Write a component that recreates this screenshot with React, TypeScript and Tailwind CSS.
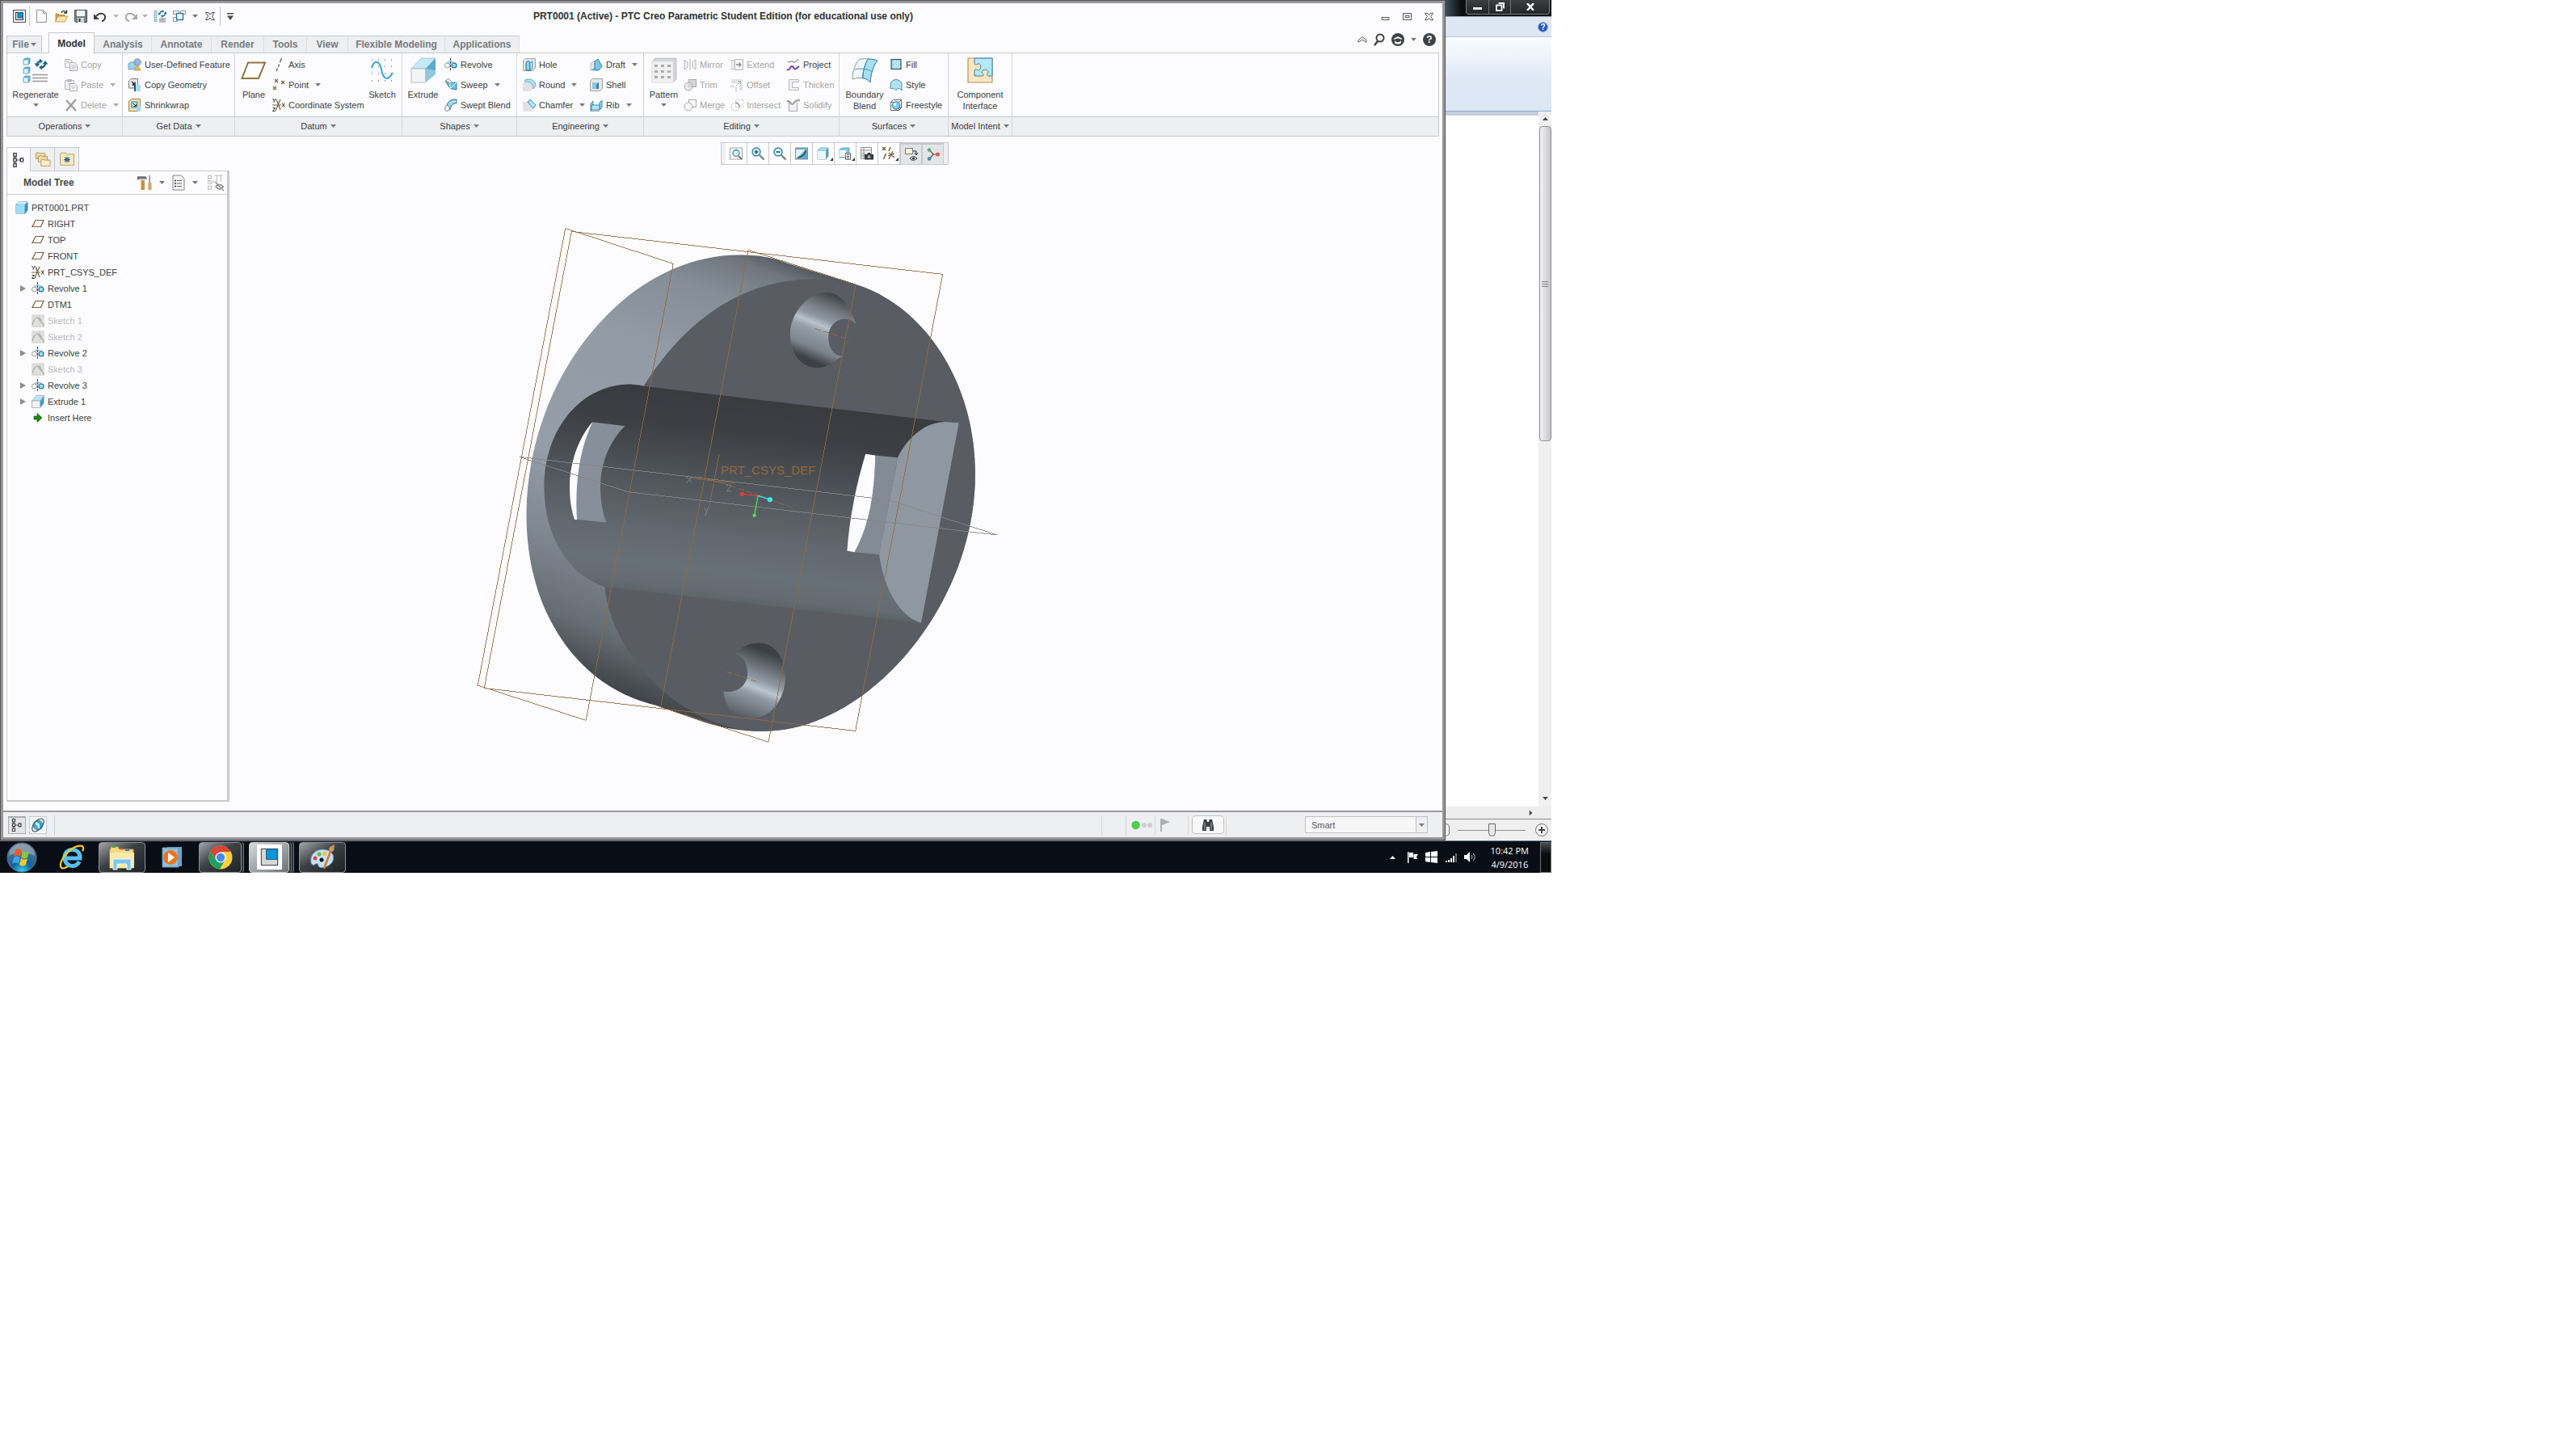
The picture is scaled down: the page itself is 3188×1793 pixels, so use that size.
import { ReactNode } from "react";
import clsx from "clsx";

const icons: Record<string, ReactNode> = {
  creo: (
    <>
      <rect x="0.5" y="0.5" width="15" height="15" fill="#fff" stroke="#4a5157" />
      <rect x="3.5" y="3.5" width="9" height="9" fill="#dfe3e6" stroke="#2d3438" />
      <rect x="6" y="3.5" width="6.5" height="6.5" fill="#0b93d8" stroke="#15557c" />
    </>
  ),
  page: <path d="M1.500 .5h8l4 4v11h-12zM9.500 .5v4h4" fill="#fff" stroke="#8c9196" />,
  open: (
    <>
      <path d="M.5 15V4.500h4l1 1.500h7V15z" fill="#c99a4c" />
      <path d="M.5 15l3-7h12l-3 7z" fill="#fbe2a5" stroke="#b1853b" strokeWidth=".7" />
      <path d="M8 4c1-3 4-3 6-1M14.500 .5v3.500h-3.500" fill="none" stroke="#333" strokeWidth="1.300" />
    </>
  ),
  save: (
    <>
      <path d="M.5 .5h15v15H2l-1.500-1.500z" fill="#7d8386" stroke="#4a4f52" />
      <rect x="3" y="1" width="10" height="7" fill="#f4f6f7" />
      <rect x="4" y="10" width="8" height="6" fill="#cdd2d4" />
      <rect x="5.500" y="11" width="2" height="4" fill="#333" />
    </>
  ),
  undo: (
    <>
      <path d="M3 8c4-5 12-4 11 2 0 2-2 4-4 4" fill="none" stroke="#3a3d40" strokeWidth="2" />
      <path d="M0 5v7h7z" fill="#3a3d40" />
    </>
  ),
  redo: (
    <>
      <path d="M13 8C9 3 1 4 2 10c0 2 2 4 4 4" fill="none" stroke="#a5a7a9" strokeWidth="2" />
      <path d="M16 5v7H9z" fill="#a5a7a9" />
    </>
  ),
  regen: (
    <>
      <path d="M1 1.500h3v3H1zM1 6.500h3v3H1zM1 11.500h3v3H1z" fill="#dff4fb" stroke="#6fa8bd" />
      <path d="M7 11h8M7 13h8M7 15h8" stroke="#777" />
      <path d="M7.500 6c0-3 2-4 4-4M14.500 4c0 3-2 4-4 4" fill="none" stroke="#1b6b8d" strokeWidth="1.400" />
      <path d="M5 4.500h4L7 7zM13 5h3.500L15 2zM11 0v4l2-2zM11 6v4L9 8z" fill="#1b6b8d" />
    </>
  ),
  windows: (
    <>
      <path d="M.5 1.500h7v4h-7zM9.500 1.500h6v4h-6zM.5 9.500h5v5h-5z" fill="#fff" stroke="#8b9297" />
      <rect x="4.500" y="4.500" width="8" height="8" fill="#e6f6fb" stroke="#27708e" strokeWidth="1.300" />
    </>
  ),
  close: <path d="M2.500 3.500h3.500l2 2.500 2-2.500h3.500l-3.200 4.500 3.200 4.500H10l-2-2.500-2 2.500H2.500L5.700 8z" fill="#fff" stroke="#3f4245" />,
  copy: (
    <>
      <path d="M.5 1.500h6l2.500 2v8H.5z" fill="#f6f6f7" stroke="#b6b8ba" />
      <path d="M6.500 5.500h6l3 2.500v7.500h-9z" fill="#f6f6f7" stroke="#a9abad" />
      <path d="M2 4h4M2 6h3M8.500 9h5M8.500 11h5M8.500 13h5" stroke="#bbb" />
    </>
  ),
  paste: (
    <>
      <path d="M.5 2.500h11v11H.5z" fill="#ededee" stroke="#b6b8ba" />
      <path d="M3 1h6v3H3z" fill="#b6b8ba" />
      <path d="M6.500 6.500h6l3 2.500v6.500h-9z" fill="#f9f9fa" stroke="#a9abad" />
      <path d="M8.500 10h5M8.500 12h5" stroke="#bbb" />
    </>
  ),
  delete: <path d="M2 2l12 13M14 1L2 15" stroke="#9d9fa1" strokeWidth="2.500" />,
  udf: (
    <>
      <circle cx="11" cy="5" r="4.500" fill="#9db4de" stroke="#6f86b4" strokeWidth=".6" />
      <path d="M0 7l2-2h6v7l-2 2H0z" fill="#9ad6ee" stroke="#4a8dab" strokeWidth=".7" />
      <path d="M11 8l4 7H7z" fill="#e2b866" stroke="#a67d34" strokeWidth=".6" />
    </>
  ),
  copygeom: (
    <>
      <path d="M.5 3l3-2.500h8v8L8 12H.5z" fill="#e9ebec" stroke="#777b7e" />
      <path d="M4 4l4 4M8 4.500V8H4.500" fill="none" stroke="#222" strokeWidth="1.300" />
      <rect x="8" y="8" width="7" height="8" fill="#a6e0f4" />
      <path d="M8 8v8" stroke="#1d5c78" strokeWidth="2" />
    </>
  ),
  shrink: (
    <>
      <path d="M.5 3l3-2.500h11v9L12 15.500H.5z" fill="#f0deb6" stroke="#a98540" />
      <rect x="4" y="4" width="7" height="7" fill="#c6ecf8" stroke="#2f7e9e" />
      <path d="M5.500 5.500l4 4M9.500 6.500v3h-3" fill="none" stroke="#222" />
      <rect x="10" y="10" width="5" height="5.500" fill="#8fdcf6" />
    </>
  ),
  plane: <path d="M5 3.500h10L11.500 11.500H1z" fill="#fff" stroke="#75603a" strokeWidth="1.200" />,
  axis: <path d="M11.500 0l-2 5M8.500 7.500l-1 3M6.500 12.500L5 16" stroke="#75603a" strokeWidth="1.400" />,
  point: <path d="M3 1l4 4M7 1L3 5M11 3l4 4M15 3l-4 4M1 10l4 4M5 10l-4 4" stroke="#75603a" strokeWidth="1.200" />,
  csys: (
    <>
      <path d="M0 8h11M10 1L4 15M5 1l5 13" stroke="#75603a" strokeWidth="1.200" />
      <path d="M.5 0l1.500 2.500M4 0L1.500 5M12 5.500l3.500 5M15.500 5.500l-3.500 5M.5 11.500h3l-3 4h3" fill="none" stroke="#333" />
    </>
  ),
  revolve: (
    <>
      <path d="M2 7c2-4 10-4 12 0" fill="#c4e6f3" stroke="#8fb4c4" />
      <circle cx="3.500" cy="9" r="3" fill="#fff" stroke="#8f9599" />
      <circle cx="12" cy="9" r="3" fill="#9fdcf3" stroke="#1d7097" strokeWidth="1.200" />
      <path d="M7.500 0v16" stroke="#444" strokeDasharray="3 1" />
    </>
  ),
  sweep: (
    <>
      <path d="M1 3l6 2.500L15 5v9l-8-1.500z" fill="#72bddb" stroke="#2c7fa3" />
      <path d="M7 5.500v7l8-7.500" fill="none" stroke="#e6f7fd" />
      <path d="M1 3l4-3 5 5-3 1z" fill="#e4e8ea" stroke="#7b8387" strokeWidth=".7" />
    </>
  ),
  swept: (
    <>
      <path d="M3 9C4 3 9 .5 15 1v5c-4-.5-7 2-8 8z" fill="#8fcfe8" stroke="#2e7a9b" />
      <path d="M5 10c1-4 4-6 10-6.500" fill="none" stroke="#d9f2fb" />
      <ellipse cx="3.500" cy="12" rx="3" ry="3.500" fill="#f1f3f4" stroke="#80888c" />
    </>
  ),
  hole: (
    <>
      <path d="M.5 3l3-2.500h12V12l-3 3.500H.5z" fill="#e4e8ea" stroke="#9aa2a6" />
      <path d="M4 15V6c0-3 5-3 5 0v9z" fill="#8ed4ee" stroke="#1f6f93" />
      <path d="M9 6c1-2 3-2 3-2v9l-3 2z" fill="#c1e9f7" stroke="#1f6f93" strokeWidth=".7" />
    </>
  ),
  round: (
    <>
      <path d="M0 4h8c4 1 5 4 5 8l-4 4H0z" fill="#dfe3e5" />
      <path d="M4 1h4c5 0 8 4 8 8l-3 4c0-5-3-9-9-9L2 3z" fill="#aadff2" stroke="#4c98b7" strokeWidth=".7" />
    </>
  ),
  chamfer: (
    <>
      <path d="M0 4h6l6 6v6H0z" fill="#dfe3e5" />
      <path d="M6 4l3-3 7 7-3 4z" fill="#b5e5f5" stroke="#2c88ae" />
    </>
  ),
  draft: (
    <>
      <path d="M1 6l5-3v12H1z" fill="#e3e6e8" stroke="#a4abae" strokeWidth=".6" />
      <path d="M6 4L10 1l5 9-4 5H6z" fill="#7cc8e4" stroke="#2f84a8" />
      <path d="M1 15l5-3 5 3z" fill="#49a9ce" />
    </>
  ),
  shell: (
    <>
      <path d="M.5 3l3-2.500h12V12l-3 3.500H.5z" fill="#e4e8ea" stroke="#9aa2a6" />
      <rect x="3" y="5" width="8" height="8" fill="#2f83a8" />
      <path d="M3 5h8l-3 3v5H3z" fill="#8fc8de" />
    </>
  ),
  rib: (
    <>
      <path d="M1 6l3-3v9l-3 3zM12 5l3-3v9l-3 3z" fill="#8fd4ee" stroke="#4a8ca8" />
      <path d="M2 8h10v6H2z" fill="#b9e6f5" stroke="#2f84a8" />
      <path d="M.5 15.500h12" stroke="#555" strokeDasharray="1 1" />
    </>
  ),
  mirror: <path d="M1 2v12l4-3V5zM8 1v14M15 2v12l-4-3V5z" fill="#f3f3f4" stroke="#b5b7b9" />,
  trim: (
    <>
      <rect x="6.500" y="1.500" width="9" height="9" fill="#d5d7d8" stroke="#a8aaac" />
      <circle cx="6" cy="10" r="5" fill="#dcddde" fillOpacity=".6" stroke="#a8aaac" />
    </>
  ),
  merge: (
    <>
      <rect x="6.500" y="1.500" width="9" height="9" fill="#f8f8f9" stroke="#a8aaac" />
      <circle cx="6" cy="10" r="5" fill="#f8f8f9" stroke="#a8aaac" />
    </>
  ),
  extend: (
    <>
      <path d="M.5 2.500h5v11h-5" fill="#e7e8e9" stroke="#c3c5c7" />
      <rect x="5.500" y="1.500" width="10" height="13" fill="#f7f7f8" stroke="#b7b9bb" />
      <path d="M7 8h6M10.500 5.500L13 8l-2.500 2.500" fill="none" stroke="#8a8c8e" strokeWidth="1.300" />
    </>
  ),
  offset: (
    <>
      <path d="M1 1h14v14h-4V6H1z" fill="#e2e3e4" />
      <path d="M0 10h6M7 11v5M7 9l5-5M9 3.500h3.500V7" fill="none" stroke="#999b9d" strokeDasharray="2 1" />
    </>
  ),
  intersect: (
    <>
      <rect x="6.500" y="1.500" width="9" height="9" fill="none" stroke="#dcddde" />
      <circle cx="6" cy="10" r="5" fill="none" stroke="#cfd0d1" />
      <path d="M6.500 5a5 5 0 0 1 4.500 5.500" fill="none" stroke="#888" strokeWidth="1.300" />
    </>
  ),
  project: (
    <>
      <path d="M1 4c3 3 4-2 6 0s3 2 7-3" fill="none" stroke="#8a8f93" strokeWidth="1.200" />
      <path d="M0 9h11l5 6H3z" fill="#ececf1" />
      <path d="M0 14c4 2 3-4 6-4s2 5 5 3l4-3" fill="none" stroke="#6a3d9a" strokeWidth="1.800" />
    </>
  ),
  thicken: <path d="M14.500 1.500h-12v13h12v-3h-8v-7h8z" fill="#f3f3f4" stroke="#b5b7b9" />,
  solidify: (
    <>
      <path d="M2.500 4v11.500h10V5" fill="#f1f1f2" stroke="#a5a7a9" />
      <path d="M0 4c3-4 5 6 8 2s4-4 8-4" fill="none" stroke="#9c9ea0" strokeWidth="2" />
    </>
  ),
  fill: (
    <>
      <rect x="2" y="1.500" width="12" height="12" fill="#9fdcf3" stroke="#4a4f53" strokeWidth="1.200" />
      <path d="M4 7l4-4M4 11l8-8M6 12l7-7M10 12l3-3" stroke="#e8f8fd" />
    </>
  ),
  style: <path d="M1 6c3-6 11-6 14 0v9c-3-4-6-3-7 0-2-3-4-3-7-2z" fill="#b3e0f1" stroke="#4b92af" />,
  freestyle: (
    <>
      <path d="M1.500 4.500h10v10h-10zM4.500 1.500h10v10h-3M1.500 4.500l3-3M11.500 4.500l3-3M11.500 14.500l3-3" fill="none" stroke="#444" strokeWidth=".8" />
      <circle cx="8" cy="8.500" r="4.800" fill="#7ec9e6" stroke="#2d7fa3" />
      <circle cx="6.500" cy="7" r="2" fill="#d8f3fc" />
    </>
  ),
  part: (
    <>
      <path d="M1 4l3-3h11v10l-3 4H1z" fill="#3a98c4" stroke="#3c6f88" strokeWidth=".8" />
      <path d="M1 4.500h10.500V15H1z" fill="#9fdff6" />
      <path d="M1 4l3-3h11l-3.500 3.500z" fill="#c6eefb" />
    </>
  ),
  extrude: (
    <>
      <path d="M.5 7L6 .5h9.500L11 7z" fill="#bfe4f2" stroke="#7aa5b8" strokeWidth=".6" />
      <path d="M11 7L15.500 .5V10L11 15.500z" fill="#459dc3" />
      <rect x=".5" y="7" width="10" height="8.500" fill="#f0f2f3" stroke="#9aa2a6" strokeWidth=".7" />
    </>
  ),
  sketchoff: (
    <>
      <rect width="16" height="16" fill="#e0e1df" />
      <path d="M1 13c3-12 10-11 12-2M8 5l8 9" fill="none" stroke="#b3b4aa" strokeWidth="1.500" />
      <path d="M2 2.500h14M2 14.500h14" stroke="#c0c1bd" strokeDasharray="1 3" />
    </>
  ),
  insert: <path d="M3 6h4V2.500L13 8l-6 5.500V10H3z" fill="#1d8a12" stroke="#0c4f08" strokeWidth=".6" />,
  tree: (
    <>
      <path d="M4 1v14M4 8h8" fill="none" stroke="#555" />
      <path d="M2.500 .5h3v3.500h-3zM2.500 6.200h3v3.500h-3zM2.500 12h3v3.500h-3zM10 6.200h3v3.500h-3z" fill="#fff" stroke="#3a3d40" strokeWidth="1.200" />
    </>
  ),
  folders: (
    <>
      <path d="M.5 1.500l3-1 1 1h6v6H.5z" fill="#f3dba5" stroke="#a8874b" strokeWidth=".7" />
      <path d="M3 5l3-1 1 1h6v6H3z" fill="#f3dba5" stroke="#a8874b" strokeWidth=".7" />
      <path d="M6 9l3-1 1 1h6v6.500H6z" fill="#fdf0ca" stroke="#a8874b" strokeWidth=".7" />
    </>
  ),
  favs: (
    <>
      <path d="M.5 3l1-2h5l1 1.500h8v12H.5z" fill="#fbeac0" stroke="#b8955a" strokeWidth=".8" />
      <path d="M8 5v7M4.500 8.500h7M5.500 6l5 5M10.500 6l-5 5" stroke="#205f7e" />
    </>
  ),
  tools: (
    <>
      <path d="M4 5h4v11H4z" fill="#c59349" />
      <path d="M0 1h9l2 3H3L0 5z" fill="#6b7074" />
      <path d="M13.500 0v9" stroke="#8a8f93" strokeWidth="1.500" />
      <path d="M12 8h3.500v8H12z" fill="#d2a35b" />
    </>
  ),
  list: (
    <>
      <path d="M1 -1h10l4 4v14H1z" fill="#f3f5f6" stroke="#82888c" />
      <path d="M6 5.500h6M6 9h6M6 12.500h6" stroke="#666" />
      <path d="M3 5.500h2M3 9h2M3 12.500h2" stroke="#333" strokeWidth="1.500" />
    </>
  ),
  treeoff: (
    <>
      <path d="M.5 1h3v3h-3zM.5 6h3v3h-3zM.5 11.500h3v3h-3zM7 1h8M7 7h3M9 1v6M13 1v6M4 7.500h4" fill="none" stroke="#c6c8c9" />
      <path d="M8 12c2-3 5-3 7.500 0-2 3-5 3-7.500 0zM8 8l8 8" fill="none" stroke="#8e9092" strokeWidth="1.300" />
    </>
  ),
  refit: (
    <>
      <rect x=".5" y="1" width="15" height="14" fill="#fff" stroke="#9aa0a4" />
      <circle cx="8" cy="7.500" r="4" fill="#d7f1fa" stroke="#3c88a8" strokeWidth="1.300" />
      <path d="M11 11l4 4" stroke="#777" strokeWidth="2" />
    </>
  ),
  zoomin: (
    <>
      <circle cx="6" cy="6" r="5" fill="#e3f6fc" stroke="#2a7fa3" strokeWidth="1.400" />
      <path d="M3.500 6h5M6 3.500v5" stroke="#0f5574" strokeWidth="1.600" />
      <path d="M10 10l5.500 5.500" stroke="#888c8f" strokeWidth="2.500" />
    </>
  ),
  zoomout: (
    <>
      <circle cx="6" cy="6" r="5" fill="#e3f6fc" stroke="#2a7fa3" strokeWidth="1.400" />
      <path d="M3.500 6h5" stroke="#0f5574" strokeWidth="1.600" />
      <path d="M10 10l5.500 5.500" stroke="#888c8f" strokeWidth="2.500" />
    </>
  ),
  repaint: (
    <>
      <rect x=".5" y="1" width="15" height="14" fill="#5fadcd" stroke="#888e92" />
      <path d="M1 3h12L2 14l-1-1z" fill="#e3f0f5" />
      <path d="M13 4c0 5-6 9-10 9" fill="none" stroke="#1e5470" strokeWidth="1.600" />
    </>
  ),
  shaded: (
    <>
      <path d="M1 4l3-3h10v10l-3 4H1z" fill="#4fa5ca" stroke="#5c8aa0" strokeWidth=".8" />
      <path d="M1 4.500h10V15H1z" fill="#eef8fc" />
      <path d="M1 4l3-3h10l-3 3.500z" fill="#9fd8ee" />
    </>
  ),
  savedviews: (
    <>
      <path d="M1 3l3-2h9v8l-3 4H1z" fill="#7ecbe6" stroke="#5c97ad" strokeWidth=".8" />
      <path d="M1 4h8v8H1z" fill="#f2fafd" />
      <path d="M8.500 7.500h6v8h-6z" fill="#fff" stroke="#666" />
      <path d="M10 9.500h3M10 11.500h3M10 13.500h3" stroke="#444" />
    </>
  ),
  viewmgr: (
    <>
      <path d="M.5 .5h13v14H.5zM.5 4h13M.5 8h6M.5 11h5M4 .5v14" fill="#f7f7f7" stroke="#8b8f92" />
      <path d="M5 9h3l1-2h3l1 2h3v6.500H5z" fill="#33373a" />
      <circle cx="10.500" cy="12" r="2" fill="#a6abae" />
    </>
  ),
  datums: (
    <>
      <path d="M0 0l4 4M4 0L0 4M10 0L8 5M4.500 8L1.500 15" stroke="#75603a" strokeWidth="1.500" />
      <path d="M13 5L8 15M8 7l7 6M7 11l8-3" stroke="#75603a" strokeWidth="1.300" />
    </>
  ),
  annot: (
    <>
      <path d="M.5 .5h9v7h-9z" fill="#fdf3d8" stroke="#777" />
      <path d="M10 4h4v4M12 6l2 3 2-3" fill="none" stroke="#333" />
      <path d="M6 13c2-3 6-3 9 0-3 3-7 3-9 0z" fill="#fff" stroke="#333" />
      <circle cx="10.500" cy="13" r="1.600" fill="#333" />
    </>
  ),
  spin: (
    <>
      <path d="M3 2l5 6h6M8 8l-5 6" fill="none" stroke="#555" strokeWidth="1.200" />
      <circle cx="3" cy="2.500" r="2.300" fill="#5cae61" />
      <circle cx="3" cy="13.500" r="2.300" fill="#3d87ae" />
      <circle cx="13.500" cy="8" r="2.500" fill="#dc5b5b" />
    </>
  ),
  globe: (
    <>
      <circle cx="8" cy="8" r="6.500" fill="#3fa6d3" />
      <path d="M4 4c3-1 3 2 5 2s0 4 2 6c-2 2-3-1-4-3S4 8 4 4z" fill="#c9edf9" />
      <ellipse cx="8" cy="8" rx="9.500" ry="5" transform="rotate(-50 8 8)" fill="none" stroke="#4a5054" strokeWidth="1.200" />
    </>
  ),
};

interface IconProps {
  name: string;
  className?: string;
}

const Icon = ({ name, className = "size-4" }: IconProps) => (
  <svg viewBox="0 0 16 16" className={clsx("shrink-0 overflow-visible", className)} aria-hidden="true">
    {icons[name]}
  </svg>
);

const Caret = ({ className = "fill-[#777b7e]" }: { className?: string }) => (
  <svg viewBox="0 0 7 4" className={clsx("w-[7px] h-1 shrink-0", className)} aria-hidden="true">
    <path d="M0 0h7L3.500 4z" />
  </svg>
);

const bigIcons: Record<string, ReactNode> = {
  Regenerate: (
    <>
      {[1, 12, 23].map((y) => (
        <g key={y}>
          <path d={`M1 ${y + 2}l2-2h6v6l-2 2H1z`} fill="#67b7d4" stroke="#5a8fa5" strokeWidth=".8" />
          <path d={`M1.500 ${y + 2.500}h5v5h-5z`} fill="#e4f7fd" />
        </g>
      ))}
      <path d="M12 21.500h19M12 25.500h19M12 29.500h19" stroke="#999" strokeWidth="1.500" />
      <path d="M18 9c0-3 1-4 4-4.500M28 7c0 3-2 5-4.500 5.500" fill="none" stroke="#1b6585" strokeWidth="2.200" />
      <path d="M14.500 7.500h7L18 12zM24.500 8.500h7L28 4zM21 1.500v6l4-3zM24 9.500v6l-4-3z" fill="#1b6585" />
    </>
  ),
  Plane: <path d="M9 6.500h21L22 26H1.500z" fill="#fff" stroke="#8f7341" strokeWidth="2" />,
  Sketch: (
    <>
      <path d="M3 3h28M3 11h28M3 20h28M3 29h28" stroke="#333" strokeDasharray="1 7" />
      <path d="M3 13c3-11 10-9 12 2s7 16 14 4" fill="none" stroke="#3aa6d8" strokeWidth="2" />
    </>
  ),
  Extrude: (
    <>
      <path d="M1 14L13 1h18L19 14z" fill="#c5e8f5" stroke="#8fb0be" strokeWidth=".6" />
      <path d="M19 14L31 1v20L19 31z" fill="#8fc9e0" />
      <path d="M19 14L31 1v15z" fill="#5aabca" />
      <rect x="1" y="14" width="17.500" height="17" fill="#f3f4f5" stroke="#a8afb3" strokeWidth=".8" />
    </>
  ),
  Pattern: (
    <>
      <path d="M1 5l4-4h26v26l-4 4H1z" fill="#d2d4d5" stroke="#b3b6b8" strokeWidth=".7" />
      <path d="M1 5h26v26H1z" fill="#f0f0f1" />
      {[9, 16, 23].map((y) => (
        <path key={y} d={`M4 ${y}h4v3H4zM12 ${y}h4v3h-4zM20 ${y}h4v3h-4z`} fill="#aaacae" />
      ))}
    </>
  ),
  Boundary: (
    <>
      <path d="M10 2c8-1 15 0 22 2-5 6-8 14-9 27-5-6-12-7-22-4C1 17 4 8 10 2z" fill="#f1f7fa" stroke="#8f989c" />
      <path d="M20 2c6 0 9 1 12 2-5 6-8 14-9 27-3-4-6-5-9-5 0-8 2-17 6-24z" fill="#a6def2" stroke="#2d87ab" />
      <path d="M4 15c8-2 15-1 22 3M20 2c-4 7-6 15-7 24" fill="none" stroke="#4b97b3" />
    </>
  ),
  Component: (
    <>
      <path d="M1 1h30v30H1z" fill="#fbe7c2" stroke="#b98f56" strokeWidth="1.200" />
      <path
        d="M9 1h22v22h-5c-3-1-1-3 0-4 1-5-8-5-8 0 1 1 4 3 1 4H9v-7c1-3 3-1 4 0 5 1 5-10 0-8-1 1-4 2-4-1z"
        fill="#b7e8f8"
        stroke="#2f86aa"
      />
    </>
  ),
};

interface Tool {
  icon: string;
  label: string;
  menu?: boolean;
}

interface Column {
  big?: string;
  lines?: string[];
  menu?: boolean;
  disabled?: boolean;
  tools?: Tool[];
  className: string;
}

interface Group {
  name: string;
  className: string;
  columns: Column[];
}

const groups: Group[] = [
  {
    name: "Operations",
    className: "w-[143px]",
    columns: [
      { big: "Regenerate", lines: ["Regenerate"], menu: true, className: "w-[70px]" },
      {
        className: "pl-px",
        disabled: true,
        tools: [
          { icon: "copy", label: "Copy" },
          { icon: "paste", label: "Paste", menu: true },
          { icon: "delete", label: "Delete", menu: true },
        ],
      },
    ],
  },
  {
    name: "Get Data",
    className: "w-[139px]",
    columns: [
      {
        className: "pl-[7px]",
        tools: [
          { icon: "udf", label: "User-Defined Feature" },
          { icon: "copygeom", label: "Copy Geometry" },
          { icon: "shrink", label: "Shrinkwrap" },
        ],
      },
    ],
  },
  {
    name: "Datum",
    className: "w-[207px]",
    columns: [
      { big: "Plane", lines: ["Plane"], className: "w-[46px]" },
      {
        className: "w-[112px]",
        tools: [
          { icon: "axis", label: "Axis" },
          { icon: "point", label: "Point", menu: true },
          { icon: "csys", label: "Coordinate System" },
        ],
      },
      { big: "Sketch", lines: ["Sketch"], className: "w-[48px]" },
    ],
  },
  {
    name: "Shapes",
    className: "w-[142px]",
    columns: [
      { big: "Extrude", lines: ["Extrude"], className: "w-[51px]" },
      {
        className: "pl-px",
        tools: [
          { icon: "revolve", label: "Revolve" },
          { icon: "sweep", label: "Sweep", menu: true },
          { icon: "swept", label: "Swept Blend" },
        ],
      },
    ],
  },
  {
    name: "Engineering",
    className: "w-[157px]",
    columns: [
      {
        className: "w-[90px] pl-[7px]",
        tools: [
          { icon: "hole", label: "Hole" },
          { icon: "round", label: "Round", menu: true },
          { icon: "chamfer", label: "Chamfer", menu: true },
        ],
      },
      {
        className: "",
        tools: [
          { icon: "draft", label: "Draft", menu: true },
          { icon: "shell", label: "Shell" },
          { icon: "rib", label: "Rib", menu: true },
        ],
      },
    ],
  },
  {
    name: "Editing",
    className: "w-[242px]",
    columns: [
      { big: "Pattern", lines: ["Pattern"], menu: true, className: "w-[49px]" },
      {
        className: "w-[58px]",
        disabled: true,
        tools: [
          { icon: "mirror", label: "Mirror" },
          { icon: "trim", label: "Trim" },
          { icon: "merge", label: "Merge" },
        ],
      },
      {
        className: "w-[70px]",
        disabled: true,
        tools: [
          { icon: "extend", label: "Extend" },
          { icon: "offset", label: "Offset" },
          { icon: "intersect", label: "Intersect" },
        ],
      },
      {
        className: "",
        tools: [
          { icon: "project", label: "Project" },
          { icon: "thicken", label: "Thicken" },
          { icon: "solidify", label: "Solidify" },
        ],
      },
    ],
  },
  {
    name: "Surfaces",
    className: "w-[135px]",
    columns: [
      { big: "Boundary", lines: ["Boundary", "Blend"], className: "w-[62px]" },
      {
        className: "",
        tools: [
          { icon: "fill", label: "Fill" },
          { icon: "style", label: "Style" },
          { icon: "freestyle", label: "Freestyle" },
        ],
      },
    ],
  },
  {
    name: "Model Intent",
    className: "w-[79px]",
    columns: [{ big: "Component", lines: ["Component", "Interface"], className: "w-[78px]" }],
  },
];

const greyed = ["Thicken", "Solidify"];

const tabs = [
  { label: "Analysis", className: "w-[71px]" },
  { label: "Annotate", className: "w-[74px]" },
  { label: "Render", className: "w-[65px]" },
  { label: "Tools", className: "w-[53px]" },
  { label: "View", className: "w-[51px]" },
  { label: "Flexible Modeling", className: "w-[120px]" },
  { label: "Applications", className: "w-[92px]" },
];

const treeItems = [
  { icon: "plane", label: "RIGHT" },
  { icon: "plane", label: "TOP" },
  { icon: "plane", label: "FRONT" },
  { icon: "csys", label: "PRT_CSYS_DEF" },
  { icon: "revolve", label: "Revolve 1", open: true },
  { icon: "plane", label: "DTM1" },
  { icon: "sketchoff", label: "Sketch 1", off: true },
  { icon: "sketchoff", label: "Sketch 2", off: true },
  { icon: "revolve", label: "Revolve 2", open: true },
  { icon: "sketchoff", label: "Sketch 3", off: true },
  { icon: "revolve", label: "Revolve 3", open: true },
  { icon: "extrude", label: "Extrude 1", open: true },
  { icon: "insert", label: "Insert Here" },
];

const viewTools = [
  { icon: "refit", label: "Refit" },
  { icon: "zoomin", label: "Zoom In" },
  { icon: "zoomout", label: "Zoom Out" },
  { icon: "repaint", label: "Repaint" },
  { icon: "shaded", label: "Display Style", more: true },
  { icon: "savedviews", label: "Saved Orientations", more: true },
  { icon: "viewmgr", label: "View Manager" },
  { icon: "datums", label: "Datum Display Filters", more: true },
  { icon: "annot", label: "Annotation Display", on: true },
  { icon: "spin", label: "Spin Center", on: true },
];

const QuickAccess = () => (
  <div className="flex flex-1 items-center gap-2 pl-3">
    <Icon name="creo" />
    <span className="-ml-1 -mr-px h-6 w-px bg-[#c5c9cd]" />
    {["page", "open", "save", "undo", "|", "redo", "|", "regen", "windows", "|", "close"].map((name, i) =>
      name === "|" ? (
        <Caret key={i} className={clsx("-mr-px", i === 9 ? "fill-[#777b7e]" : "fill-[#b4b7b9]")} />
      ) : (
        <button key={i} aria-label={name} className={clsx(name === "redo" && "-mr-0.5")}>
          <Icon name={name} />
        </button>
      )
    )}
    <span className="-ml-1 h-6 w-px bg-[#c5c9cd]" />
    <svg viewBox="0 0 8 9" className="h-[9px] w-2" aria-hidden="true">
      <path d="M0 0h8v1.500H0zM0 3.500h8L4 9z" fill="#4a4d50" />
    </svg>
  </div>
);

const TitleBar = () => (
  <header className="flex h-8 items-center">
    <QuickAccess />
    <h1 className="text-xs font-bold text-[#2f3133]">
      PRT0001 (Active) - PTC Creo Parametric Student Edition (for educational use only)
    </h1>
    <div className="flex flex-1 items-center justify-end gap-4 pr-[11px]">
      <button aria-label="Minimize">
        <svg viewBox="0 0 11 11" className="size-[11px]">
          <path d="M1 6.500h9v3H1z" fill="#fff" stroke="#555" />
        </svg>
      </button>
      <button aria-label="Restore">
        <svg viewBox="0 0 11 11" className="size-[11px]">
          <path d="M.5 1.500h10v8H.5zM3 4.500h5v2H3z" fill="#fff" stroke="#555" />
        </svg>
      </button>
      <button aria-label="Close">
        <svg viewBox="2 3 12 10" className="size-[11px]">
          {icons.close}
        </svg>
      </button>
    </div>
  </header>
);

const TabRow = () => (
  <nav className="ml-1 mr-1 flex h-[29px] items-end text-xs font-bold text-[#777b7f]">
    <button className="h-[21px] w-11 border border-b-0 border-[#c5c9cd] bg-[#eeeff1]">
      <span className="flex items-center justify-center gap-0.5">
        File <Caret />
      </span>
    </button>
    <button className="relative -mb-px ml-2 h-[26px] w-[57px] border border-b-0 border-[#c5c9cd] bg-[#fcfcfe] text-[#2f3133]">
      Model
    </button>
    {tabs.map((tab) => (
      <button
        key={tab.label}
        className={clsx("h-[21px] border-t border-r border-[#c5c9cd] border-r-[#dcdfe2] bg-[#eeeff1]", tab.className)}
      >
        {tab.label}
      </button>
    ))}
    <div className="mb-2 ml-auto flex items-center gap-2 pr-1">
      <svg viewBox="0 0 12 8" className="h-2 w-3" aria-hidden="true">
        <path d="M1 4.500L6 .7l5 3.800v2.800L6 4 1 7.300z" fill="#fff" stroke="#555" />
      </svg>
      <svg viewBox="0 0 14 16" className="h-4 w-[14px]" aria-hidden="true">
        <circle cx="8" cy="6" r="4.500" fill="none" stroke="#3f4245" strokeWidth="2" />
        <path d="M5 10l-4 5" stroke="#3f4245" strokeWidth="2.500" />
      </svg>
      <svg viewBox="0 0 16 16" className="size-4" aria-hidden="true">
        <circle cx="8" cy="8" r="8" fill="#3f4245" />
        <path d="M2.500 7L8 4l5.500 3L12 8c-2-2-6-2-8 0z" fill="#fff" />
        <path d="M4 9c2 3 6 3 8 0v3c-2 2-6 2-8 0z" fill="#fff" />
      </svg>
      <Caret />
      <button
        aria-label="Help"
        className="size-4 rounded-full bg-[#3f4245] text-center text-xs leading-4 font-bold text-white"
      >
        ?
      </button>
    </div>
  </nav>
);

const Ribbon = () => (
  <section className="mx-1 flex border border-[#c5c9cd] text-[11px] leading-[14px] text-[#3b3e41]">
    {groups.map((group) => (
      <div key={group.name} className={clsx("shrink-0 border-r border-[#d3d6d9]", group.className)}>
        <div className="flex h-[78px] pt-px">
          {group.columns.map((col, i) =>
            col.big ? (
              <button key={i} className={clsx("flex shrink-0 flex-col items-center pt-1", col.className)}>
                <svg viewBox="0 0 32 32" className="mb-[7px] size-8" aria-hidden="true">
                  {bigIcons[col.big]}
                </svg>
                {col.lines?.map((line) => (
                  <span key={line}>{line}</span>
                ))}
                {col.menu && <Caret className="mt-1 fill-[#777b7e]" />}
              </button>
            ) : (
              <div key={i} className={clsx("flex shrink-0 flex-col", col.className)}>
                {col.tools?.map((tool) => (
                  <button
                    key={tool.label}
                    disabled={col.disabled}
                    className={clsx(
                      "flex h-[25px] items-center gap-1 whitespace-nowrap",
                      (col.disabled || greyed.includes(tool.label)) && "text-[#a3a5a7]"
                    )}
                  >
                    <Icon name={tool.icon} />
                    {tool.label}
                    {tool.menu && <Caret className={clsx("ml-1", col.disabled ? "fill-[#a9abad]" : "fill-[#777b7e]")} />}
                  </button>
                ))}
              </div>
            )
          )}
        </div>
        <button className="flex h-6 w-full items-center justify-center gap-1 border-t border-[#c5c9cd] bg-[#eeeff1] pb-px whitespace-nowrap">
          {group.name}
          <Caret />
        </button>
      </div>
    ))}
    <div className="flex flex-1 flex-col justify-end">
      <div className="h-6 border-t border-[#c5c9cd] bg-[#eeeff1]" />
    </div>
  </section>
);

const ModelTree = () => (
  <aside className="ml-1 flex w-[276px] shrink-0 flex-col pt-[13px] pb-[11px] text-[11px] text-[#3b3e41]">
    <div className="flex">
      <button
        aria-label="Model Tree"
        className="relative -mb-px flex h-[30px] w-[30px] items-center justify-center border border-b-0 border-[#c5c9cd] bg-[#fcfcfe]"
      >
        <Icon name="tree" className="size-[18px]" />
      </button>
      {["folders", "favs"].map((name) => (
        <button
          key={name}
          aria-label={name}
          className="flex h-[29px] w-[30px] items-center justify-center border border-b-0 border-l-0 border-[#c5c9cd] bg-[#eeeff1]"
        >
          <Icon name={name} className="size-[18px]" />
        </button>
      ))}
    </div>
    <div className="flex-1 border border-r-[3px] border-b-2 border-[#c8cacc]">
      <div className="flex h-[29px] items-center border-b border-[#c8cacc] pl-5">
        <h2 className="flex-1 text-xs font-bold text-[#45494c]">Model Tree</h2>
        <Icon name="tools" className="size-[18px]" />
        <Caret className="mx-[9px] fill-[#777b7e]" />
        <Icon name="list" />
        <Caret className="ml-[9px] fill-[#777b7e]" />
        <Icon name="treeoff" className="mr-1 ml-3 size-5" />
      </div>
      <ul className="pt-1.5">
        <li className="flex h-5 items-center gap-1 pl-[10px]">
          <Icon name="part" />
          PRT0001.PRT
        </li>
        {treeItems.map((item) => (
          <li key={item.label} className={clsx("flex h-5 items-center pl-4", item.off && "text-[#b9bbbc]")}>
            <svg viewBox="0 0 7 8" className="mr-[7px] h-2 w-[7px]" aria-hidden="true">
              {item.open && <path d="M0 0l7 4-7 4z" fill="#8b8d8f" />}
            </svg>
            <Icon name={item.icon} className="mr-1 size-4" />
            {item.label}
          </li>
        ))}
      </ul>
    </div>
  </aside>
);

const Part = () => (
  <svg viewBox="0 0 700 680" className="mt-14 ml-[276px] h-[680px] w-[700px]" role="img" aria-label="PRT0001">
    <defs>
      <linearGradient id="rim" gradientUnits="userSpaceOnUse" x1="1000" y1="150" x2="480" y2="1450">
        <stop offset="0" stopColor="#474c51" />
        <stop offset=".05" stopColor="#6f767e" />
        <stop offset=".13" stopColor="#858e97" />
        <stop offset=".28" stopColor="#929ba6" />
        <stop offset=".55" stopColor="#949da8" />
        <stop offset=".71" stopColor="#7f8791" />
        <stop offset=".85" stopColor="#666d74" />
        <stop offset=".93" stopColor="#494e53" />
        <stop offset=".98" stopColor="#3a3d41" />
      </linearGradient>
      <linearGradient id="slot" gradientUnits="userSpaceOnUse" x1="900" y1="545" x2="831" y2="1130">
        <stop offset="0" stopColor="#393b3f" />
        <stop offset=".17" stopColor="#3c3f43" />
        <stop offset=".45" stopColor="#52575d" />
        <stop offset=".7" stopColor="#626970" />
        <stop offset=".85" stopColor="#687077" />
        <stop offset=".95" stopColor="#646b72" />
        <stop offset="1" stopColor="#5b6167" />
      </linearGradient>
      <linearGradient id="coneTop" gradientUnits="userSpaceOnUse" x1="1075" y1="235" x2="985" y2="450">
        <stop offset=".05" stopColor="#404448" />
        <stop offset=".25" stopColor="#757c84" />
        <stop offset=".38" stopColor="#8f98a2" />
        <stop offset=".46" stopColor="#b9c3ce" />
        <stop offset=".54" stopColor="#959ea9" />
        <stop offset=".75" stopColor="#7b838b" />
        <stop offset=".9" stopColor="#3d4044" />
      </linearGradient>
      <linearGradient id="coneBottom" gradientUnits="userSpaceOnUse" x1="870" y1="1235" x2="785" y2="1450">
        <stop offset=".1" stopColor="#3d4044" />
        <stop offset=".25" stopColor="#5f656b" />
        <stop offset=".45" stopColor="#8f98a2" />
        <stop offset=".56" stopColor="#bbc5d0" />
        <stop offset=".65" stopColor="#929ba6" />
        <stop offset="1" stopColor="#50555a" />
      </linearGradient>
    </defs>
    <g transform="scale(.44643 .43367)">
      <path
        d="M795 128C860 128 890 137 930 152L1118 212C1300 270 1449 480 1449 755C1449 1130 1150 1487 860 1487C800 1487 750 1478 700 1462L560 1412C350 1360 205 1150 205 870C205 480 480 128 795 128Z"
        fill="url(#rim)"
      />
      <path
        d="M1000 197C1040 197 1080 200 1118 212C1300 270 1449 480 1449 755C1449 1130 1150 1487 860 1487C640 1487 440 1270 422 1075L530 502C640 320 800 197 1000 197Z"
        fill="#595d63"
      />
      <path
        d="M530 502C510 498 500 497 485 497C360 500 254 620 254 790C254 930 320 1040 422 1075L1299 1178L1404 607L1367 604Z"
        fill="url(#slot)"
      />
      <path
        d="M388 605L478 616C430 665 410 730 410 790C410 825 415 860 426 891L338 882C328 850 325 820 325 790C325 720 350 650 388 605Z"
        fill="#87909a"
      />
      <path d="M388 605C350 650 325 720 325 790C325 820 328 850 338 882L345 884C340 780 350 690 388 605Z" fill="#fcfcfe" />
      <path d="M1172 700L1234 706L1183 983L1114 976C1155 900 1170 810 1172 700Z" fill="#838c95" />
      <path d="M1145 696L1172 700C1170 810 1155 900 1114 976L1094 972C1100 880 1120 780 1145 696Z" fill="#fcfcfe" />
      <path
        d="M1404 607L1367 604C1310 604 1260 650 1234 706L1183 983C1195 1080 1240 1160 1299 1178Z"
        fill="#8f98a1"
      />
      <path
        d="M1036 235C1080 235 1105 280 1119 325C1106 312 1095 310 1085 310C1060 312 1042 335 1042 363C1042 395 1058 414 1080 417C1060 430 1040 450 1012 450C960 450 936 400 936 355C936 290 990 235 1036 235Z"
        fill="url(#coneTop)"
      />
      <path
        d="M848 1235C895 1235 923 1280 923 1335C920 1400 880 1452 825 1450C780 1450 752 1410 752 1373C790 1380 818 1355 818 1320C818 1295 805 1270 785 1268C800 1245 825 1235 848 1235Z"
        fill="url(#coneBottom)"
      />
      <g fill="none" stroke="#84868a" strokeWidth="2" shapeRendering="crispEdges">
        <path d="M185 704L1210 827L1510 927L487 804Z" />
        <path d="M650 760l14 18M664 760l-14 18M760 786h13l-13 16h13M698 848l6 11M709 848l-9 24" />
      </g>
      <g fill="none" stroke="#93693d" strokeWidth="2" shapeRendering="crispEdges">
        <path d="M313 52L612 153L370 1456L70 1356Z" />
        <path d="M330 61L1359 183L1117 1486L88 1364Z" />
        <path d="M820 114L1118 212L876 1518L577 1418Z" />
        <path d="M739 697L710 855M660 765L785 780M680 760L770 786" />
        <path d="M770 786L945 850M1006 338L1100 370M759 1317L852 1348" strokeDasharray="16 8" />
      </g>
      <path d="M847 815L803 810" stroke="#e8393b" strokeWidth="3" />
      <path d="M847 815L880 826" stroke="#3fe9ea" strokeWidth="3" />
      <path d="M847 815L837 871" stroke="#4fe04f" strokeWidth="3" />
      <circle cx="803" cy="810" r="6" fill="#e8393b" />
      <circle cx="880" cy="826" r="7" fill="#3fe9ea" />
      <circle cx="837" cy="871" r="5" fill="#4fe04f" />
    </g>
    <text x="332" y="327" fontSize="15" fill="#93693d">
      PRT_CSYS_DEF
    </text>
  </svg>
);

const Canvas = () => (
  <main className="flex min-w-0 flex-1 flex-col pt-[7px]">
    <div className="mr-[3px] flex h-7 self-center border border-[#c5c9cd] bg-[#eeeff1] px-[5px]">
      {viewTools.map((tool) => (
        <button
          key={tool.label}
          aria-label={tool.label}
          className={clsx(
            "flex w-[27px] shrink-0 items-center justify-center border-r border-[#c5c9cd]",
            tool.on ? "border-t-2 border-l border-[#9b9ea1] bg-[#e3e4e6]" : "bg-white"
          )}
        >
          <Icon name={tool.icon} />
          {tool.more && (
            <svg viewBox="0 0 4 4" className="-mr-1 mb-1 size-1 self-end" aria-hidden="true">
              <path d="M4 0v4H0z" fill="#333" />
            </svg>
          )}
        </button>
      ))}
    </div>
    <Part />
  </main>
);

const StatusBar = () => (
  <footer className="flex h-[33px] items-center border-t-2 border-[#9b9999] bg-[#eeeff1] pr-[18px] pl-1.5 text-[11px] text-[#55585b]">
    <button
      aria-label="Toggle navigator"
      className="flex h-[22px] w-[22px] items-center justify-center border border-t-2 border-[#a9acaf] bg-[#e3e4e6]"
    >
      <Icon name="tree" />
    </button>
    <button
      aria-label="Toggle browser"
      className="ml-1 flex h-[22px] w-[22px] items-center justify-center border border-[#bcd0da] bg-[#f6f7f8]"
    >
      <Icon name="globe" />
    </button>
    <span className="ml-[9px] h-6 w-px bg-[#cfd2d4]" />
    <span className="ml-auto h-6 w-px bg-[#d5d7d9]" />
    <span className="ml-[29px] h-6 w-px bg-[#d5d7d9]" />
    <svg viewBox="0 0 28 12" className="ml-1.5 h-3 w-7" aria-hidden="true">
      <circle cx="5.500" cy="6" r="5.200" fill="#4fce4c" />
      <circle cx="16" cy="6" r="3" fill="#cbcdce" />
      <circle cx="23" cy="6" r="3" fill="#cbcdce" />
    </svg>
    <span className="ml-px h-6 w-px bg-[#d5d7d9]" />
    <svg viewBox="0 0 12 16" className="ml-1.5 h-4 w-3" aria-hidden="true">
      <path d="M0 0h2v16H0zM2 0l10 4-10 4z" fill="#aeb0b2" />
    </svg>
    <span className="ml-[22px] h-6 w-px bg-[#d5d7d9]" />
    <button
      aria-label="Find"
      className="ml-1 flex h-[23px] w-10 items-center justify-center rounded-sm border border-[#c0c3c6] bg-[#f8f8f9]"
    >
      <svg viewBox="0 0 16 16" className="size-4" aria-hidden="true">
        <path d="M3 1h3l1 3h2l1-3h3l2 9v5h-5v-5H6v5H1v-5z" fill="#3c3f42" />
        <path d="M4 5v9M12 5v9" stroke="#8a8d90" strokeWidth="1.500" />
      </svg>
    </button>
    <span className="ml-[2px] h-6 w-px bg-[#d5d7d9]" />
    <div className="relative ml-[97px] w-[152px]">
      <select
        aria-label="Selection filter"
        className="h-[21px] w-full appearance-none border border-[#c0c3c6] bg-[#f7f7f8] pl-[7px] leading-4"
      >
        <option>Smart</option>
      </select>
      <span className="pointer-events-none absolute inset-y-0 right-0 flex w-[15px] items-center justify-center border border-[#c0c3c6] bg-[#eeeff1]">
        <Caret />
      </span>
    </div>
  </footer>
);

const CreoWindow = () => (
  <div className="min-w-0 flex-1 border border-[#555353]">
    <div className="border-[3px] border-[#989696] bg-[#fcfcfe]">
      <TitleBar />
      <TabRow />
      <Ribbon />
      <div className="flex h-[834px]">
        <ModelTree />
        <Canvas />
      </div>
      <StatusBar />
    </div>
  </div>
);

const BackWindow = () => (
  <div className="flex w-[131px] shrink-0 flex-col bg-white">
    <div className="flex h-[21px] justify-end border-b border-[#9aa3ad] bg-linear-to-r from-[#3f505e] via-[#0b0e11] via-15% to-[#0b0e11] pr-[2px]">
      <div className="flex h-[18px] overflow-hidden rounded-b border border-t-0 border-[#7c8084] bg-linear-to-b from-[#3c3f42] to-[#232527]">
        <button aria-label="Minimize window" className="flex w-[28px] items-end justify-center border-r border-[#6c7074] pb-[5px]">
          <span className="h-[3px] w-[11px] bg-[#eceeef]" />
        </button>
        <button aria-label="Restore window" className="flex w-[27px] items-center justify-center border-r border-[#6c7074]">
          <svg viewBox="0 0 11 11" className="size-[11px]">
            <path d="M3.500 1h6.500v6.500M1 3.500h6.500V10H1z" fill="none" stroke="#eceeef" strokeWidth="2" />
          </svg>
        </button>
        <button aria-label="Close window" className="flex w-[47px] items-center justify-center">
          <svg viewBox="0 0 10 9" className="h-[9px] w-[10px]">
            <path d="M1 0l8 9M9 0L1 9" stroke="#fff" strokeWidth="2.500" />
          </svg>
        </button>
      </div>
    </div>
    <div className="flex h-[25px] items-center justify-end border-b border-[#b5cbe3] bg-[#dde7f4] pr-1">
      <button
        aria-label="Help topics"
        className="size-[13px] rounded-full border border-[#9db6e4] bg-[#2257c5] text-center text-[10px] leading-[11px] font-bold text-white"
      >
        ?
      </button>
    </div>
    <div className="h-[92px] border-b border-[#93abc8] bg-linear-to-b from-[#f8fcff] via-[#dfe9f5] via-55% to-[#dbe7f6]" />
    <div className="flex h-[860px]">
      <div className="h-[5px] flex-1 bg-[#c4cede]" />
      <div className="flex w-4 flex-col items-center bg-[#f0f0f1]">
        <Caret className="my-[7px] rotate-180 fill-[#444]" />
        <div className="flex h-[390px] w-[15px] flex-col items-center justify-center gap-0.5 rounded-sm border border-[#8f9194] bg-linear-to-r from-[#f4f4f5] to-[#c3c5c8]">
          <span className="h-px w-2 bg-[#777]" />
          <span className="h-px w-2 bg-[#777]" />
          <span className="h-px w-2 bg-[#777]" />
        </div>
        <Caret className="mt-auto mb-2 fill-[#444]" />
      </div>
    </div>
    <div className="flex h-4 items-center justify-end border-b border-[#8b8d90] bg-[#eeeeef] pr-[22px]">
      <Caret className="-rotate-90 fill-[#444]" />
    </div>
    <div className="flex flex-1 items-center bg-[#efeff0]">
      <span className="h-4 w-[5px] rounded-r-full border border-l-0 border-[#777]" />
      <input
        type="range"
        aria-label="Zoom"
        defaultValue="51"
        className="ml-[10px] h-4 w-[84px] appearance-none bg-transparent [&::-webkit-slider-runnable-track]:h-px [&::-webkit-slider-runnable-track]:bg-[#8b8d90] [&::-webkit-slider-thumb]:-mt-2 [&::-webkit-slider-thumb]:h-4 [&::-webkit-slider-thumb]:w-[9px] [&::-webkit-slider-thumb]:appearance-none [&::-webkit-slider-thumb]:rounded-b-full [&::-webkit-slider-thumb]:border [&::-webkit-slider-thumb]:border-[#666] [&::-webkit-slider-thumb]:bg-[#e6e7e8]"
      />
      <button aria-label="Zoom in" className="mr-1 ml-auto">
        <svg viewBox="0 0 16 16" className="size-4">
          <circle cx="8" cy="8" r="7.500" fill="#f7f7f8" stroke="#707376" />
          <path d="M4 8h8M8 4v8" stroke="#444" strokeWidth="2" />
        </svg>
      </button>
    </div>
  </div>
);

const slot = "flex h-[38px] items-center justify-center";
const running = "rounded-sm border border-[#8d9297] bg-linear-to-br from-[#a3a7aa] via-[#3b4045] via-45% to-[#1f2327]";
const stacked = "h-[38px] w-[3px] rounded-r-sm border-r border-[#6d7276] bg-[#2b3035]";

const Taskbar = () => (
  <div className="flex h-10 items-center border-t border-[#6f7d8b] bg-[#090d15] text-white">
    <button aria-label="Start" className="mr-[14px] ml-2">
      <svg viewBox="0 0 38 38" className="size-[38px]">
        <defs>
          <radialGradient id="orb" cx=".5" cy="1" r=".9">
            <stop offset="0" stopColor="#35d6fb" />
            <stop offset=".4" stopColor="#11659c" />
            <stop offset="1" stopColor="#5d7488" />
          </radialGradient>
        </defs>
        <circle cx="19" cy="19" r="18" fill="url(#orb)" stroke="#53738a" />
        <path d="M3 17a16 15 0 0 1 32 0c-9-5-23-5-32 0z" fill="#fff" fillOpacity=".3" />
        <path d="M11 10c3-2 5-2 8 0l-2 8c-3-2-5-2-8 0z" fill="#ee5a25" />
        <path d="M20 11c3 2 5 2 8 0l-2 8c-3 2-5 2-8 0z" fill="#8cc63e" />
        <path d="M9 19c3-2 5-2 8 0l-2 8c-3-2-5-2-8 0z" fill="#3fa5e6" />
        <path d="M18 20c3 2 5 2 8 0l-2 8c-3 2-5 2-8 0z" fill="#fdc62c" />
      </svg>
    </button>
    <div className="flex gap-1">
      <button aria-label="Internet Explorer" className={clsx(slot, "w-[58px]")}>
        <svg viewBox="0 0 32 32" className="size-8">
          <path d="M7 17h19c1-14-19-14-19-1 0 13 15 13 18 5" fill="none" stroke="#53c0f3" strokeWidth="5" />
          <path d="M3 29C-3 21 17-2 29 2c2 2 1 5 0 6M3 29c2 1 5 0 8-2" fill="none" stroke="#f6c81f" strokeWidth="2.200" />
        </svg>
      </button>
      <button aria-label="Explorer" className={clsx(slot, running, "w-[58px]")}>
        <svg viewBox="0 0 32 32" className="size-8">
          <path d="M1 7l2-4h8l2 3h17v23H1z" fill="#f3d983" stroke="#c9a548" />
          <path d="M4 2h4v2H4z" fill="#3ba640" />
          <path d="M12 4h4v2h-4z" fill="#d54c36" />
          <path d="M20 6h5v2h-5z" fill="#3a86cf" />
          <path d="M1 10h30v19H1z" fill="#f9eaa9" />
          <path d="M5 31V20c0-2 1-2 3-2h16c2 0 3 0 3 2v11h-5v-7H10v7z" fill="#7fc5ea" stroke="#e3f4fc" />
        </svg>
      </button>
      <button aria-label="Media Player" className={clsx(slot, "w-[58px]")}>
        <svg viewBox="0 0 28 28" className="size-7">
          <path d="M8 1h18v24H8z" fill="#6fa6c8" />
          <path d="M2 2h20v24H2z" fill="#8fc0dc" stroke="#5e91b0" />
          <circle cx="12" cy="14" r="9" fill="#f0731f" />
          <path d="M9 8l8 6-8 6z" fill="#fff" />
        </svg>
      </button>
      <div className="flex w-[58px]">
        <button aria-label="Chrome" className={clsx(slot, running, "w-[53px]")}>
          <svg viewBox="0 0 30 30" className="size-[30px]">
            <circle cx="15" cy="15" r="14.500" fill="#fdd03b" />
            <path d="M15 8h12.600a14.500 14.500 0 0 0-25.200-.2L9 18z" fill="#dc4437" />
            <path d="M2.400 7.800A14.500 14.500 0 0 0 14 29.500L20.500 18 15 21 9 18z" fill="#1da05f" />
            <circle cx="15" cy="15" r="6.500" fill="#fff" />
            <circle cx="15" cy="15" r="5.200" fill="#4688f1" />
          </svg>
        </button>
        <span className={stacked} />
      </div>
      <div className="flex w-[58px]">
        <button
          aria-label="Creo Parametric"
          className={clsx(slot, "w-[50px] rounded-sm border border-[#c9ccce] bg-linear-to-br from-[#d9dbdd] to-[#6f7376]")}
        >
          <svg viewBox="0 0 32 32" className="size-[31px]">
            <path d="M0 0h32v32H0z" fill="#fff" />
            <path d="M5.500 5.500h21v21h-21z" fill="#d9d7d6" stroke="#333" />
            <path d="M12 6h14v13H12z" fill="#0b96dc" stroke="#1b5a7d" />
          </svg>
        </button>
        <span className={stacked} />
        <span className={stacked} />
      </div>
      <button aria-label="Paint" className={clsx(slot, running, "w-[58px]")}>
        <svg viewBox="0 0 32 32" className="size-8">
          <path d="M2 22C0 10 12 4 22 7c10 3 9 14 3 18-5 4-13 5-14 1s-3-2-5-1-4-1-4-3z" fill="#c5dff0" stroke="#7ba4c0" />
          <circle cx="7" cy="17" r="2.500" fill="#dc4747" />
          <circle cx="12" cy="12" r="2.500" fill="#69b64b" />
          <circle cx="19" cy="11" r="2.500" fill="#f4c23a" />
          <circle cx="15" cy="19" r="2.500" fill="#0d1118" />
          <path d="M18 30L27 6" stroke="#d67a2b" strokeWidth="2.500" />
          <path d="M24 7c0-5 4-5 7-7-1 4 1 7-3 9z" fill="#c79864" />
        </svg>
      </button>
    </div>
    <div className="ml-auto flex items-center">
      <Caret className="mr-[14px] rotate-180 fill-white" />
      <svg viewBox="0 0 15 15" className="mr-2 size-[15px]" aria-hidden="true">
        <path d="M1 1h1.500v14H1zM3 2h5v6H3zM8.500 4h5.500l-2 3 1 3H8.500z" fill="#fff" />
      </svg>
      <svg viewBox="0 0 15 15" className="mr-[10px] size-[15px]" aria-hidden="true">
        <path d="M0 2l6-1v6H0zM7 1l8-1v7H7zM0 8h6v6l-6-1zM7 8h8v7l-8-1z" fill="#fff" />
      </svg>
      <svg viewBox="0 0 14 12" className="mr-[9px] h-3 w-[14px]" aria-hidden="true">
        <path d="M0 10h2v2H0zM3 9h2v3H3zM6 7h2v5H6zM9 4h2v8H9z" fill="#fff" />
        <path d="M12 1h2v11h-2z" fill="#666" />
      </svg>
      <svg viewBox="0 0 15 13" className="mr-[18px] h-[13px] w-[15px]" aria-hidden="true">
        <path d="M0 4h3l4-4v13L3 9H0z" fill="#fff" />
        <path d="M9 4c1 1 1 4 0 5M11 2c3 3 3 6 0 9" fill="none" stroke="#ccc" />
      </svg>
      <time className="mr-[14px] text-center font-['Open_Sans',sans-serif] text-[11px] leading-[17px]">
        10:42 PM
        <br />
        4/9/2016
      </time>
      <button
        aria-label="Show desktop"
        className="h-[38px] w-[14px] border border-[#6d7276] bg-linear-to-b from-[#4a4e52] to-[#0a0c0e] to-40%"
      />
    </div>
  </div>
);

const App = () => (
  <div className="min-h-screen bg-white font-['Liberation_Sans',Arial,sans-serif]">
    <div className="max-w-[1920px]">
      <div className="flex">
        <CreoWindow />
        <BackWindow />
      </div>
      <Taskbar />
    </div>
  </div>
);

export default App;
